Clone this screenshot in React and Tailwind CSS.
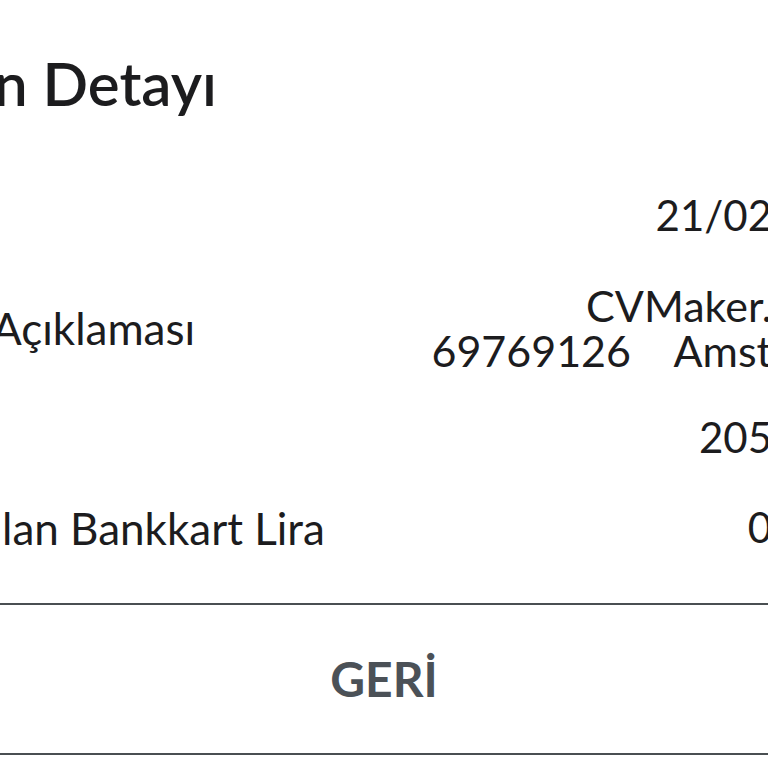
import React from 'react'

const rows = [
  { label: '', value: ['21/02'], h: 'h-[90px]', size: 'text-[42px]' },
  { label: 'Açıklaması', labelCut: true, value: ['CVMaker.', '69769126\u00a0\u00a0\u00a0\u00a0Amst'], h: 'h-[135px]', size: 'text-[43px]' },
  { label: '', value: ['205'], h: 'h-[85px]', size: 'text-[42px]' },
  { label: 'lan Bankkart Lira', value: ['0'], h: 'h-[95px]', size: 'text-[42px]' },
]

export default function App() {
  return (
    <div className="w-[768px] h-[768px] overflow-hidden bg-white text-[#1c1c1e] flex flex-col" style={{ fontFamily: 'Lato, "Noto Sans", sans-serif' }}>
      <div className="h-[170px] pt-[53px]">
        <div className="text-[60px] leading-none font-semibold ml-[-6px] whitespace-nowrap">n Detayı</div>
      </div>
      {rows.map((r, i) => (
        <div key={i} className={`${r.h} flex items-center justify-between`}>
          <div className={`text-[44px] leading-none whitespace-nowrap ${r.labelCut ? 'ml-[-8px]' : 'ml-[2px]'}`}>{r.label}</div>
          <div className={`text-right ${r.size} leading-[45px] whitespace-nowrap mr-[-4px]`}>
            {r.value.map((v, j) => <div key={j}>{v}</div>)}
          </div>
        </div>
      ))}
      <div className="h-[28px]" />
      <div className="border-t-2 border-b-2 border-[#4a4f52] h-[152px] flex items-center justify-center">
        <span className="text-[48px] font-bold text-[#4b5157] leading-none">GERİ</span>
      </div>
    </div>
  )
}
